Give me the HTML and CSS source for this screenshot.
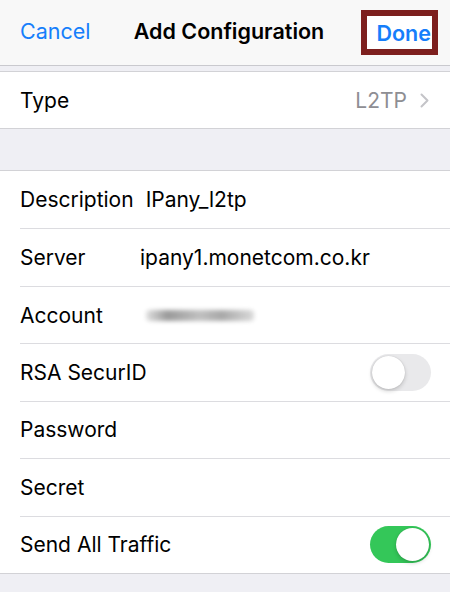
FILE: index.html
```html
<!DOCTYPE html>
<html lang="en">
<head>
  <meta charset="UTF-8" />
  <meta name="viewport" content="width=device-width, initial-scale=1.0" />
  <title>Add Configuration</title>
  <link rel="stylesheet" href="styles.css">
</head>
<body>
<div class="nav">
  <span class="nav-btn cancel">Cancel</span>
  <span class="nav-title">Add Configuration</span>
  <span class="done-box"><span class="nav-btn done">Done</span></span>
</div>

<div class="group type-group">
  <div class="row">
    <div class="cell">
      <span class="label">Type</span>
      <span class="detail">L2TP</span>
      <svg class="chevron" width="9" height="15" viewBox="0 0 9 15">
        <path d="M1.5 1.5 L7.5 7.5 L1.5 13.5" fill="none" stroke="#c4c4c8" stroke-width="2" stroke-linecap="round" stroke-linejoin="round"/>
      </svg>
    </div>
  </div>
</div>

<div class="group main-group">
  <div class="row">
    <div class="cell">
      <span class="label wide">Description</span>
      <span class="value">IPany_l2tp</span>
    </div>
  </div>
  <div class="row">
    <div class="cell">
      <span class="label col">Server</span>
      <span class="value">ipany1.monetcom.co.kr</span>
    </div>
  </div>
  <div class="row">
    <div class="cell">
      <span class="label col">Account</span>
      <span class="blurred"></span>
    </div>
  </div>
  <div class="row">
    <div class="cell">
      <span class="label">RSA SecurID</span>
      <span class="switch"><span class="knob"></span></span>
    </div>
  </div>
  <div class="row">
    <div class="cell">
      <span class="label">Password</span>
    </div>
  </div>
  <div class="row">
    <div class="cell">
      <span class="label">Secret</span>
    </div>
  </div>
  <div class="row">
    <div class="cell">
      <span class="label">Send All Traffic</span>
      <span class="switch on"><span class="knob"></span></span>
    </div>
  </div>
</div>
</body>
</html>
```

FILE: styles.css
```css
body {
  margin: 0;
  padding: 0;
  background: #efeff4;
  font-family: Inter, "Liberation Sans", Arial, sans-serif;
  color: #000;
  font-size: 21px;
}
.nav {
  height: 66px;
  box-sizing: border-box;
  border-bottom: 1px solid #c9c9ce;
  background: #f8f8f8;
  display: grid;
  grid-template-columns: 1fr auto 1fr;
  align-items: center;
  padding: 0 12px 4px 20px;
  margin-bottom: 5px;
  font-size: 21.5px;
}
.nav-btn {
  color: #157efb;
}
.cancel {
  justify-self: start;
}
.nav-title {
  font-weight: 600;
}
.done-box {
  justify-self: end;
  width: 77px;
  height: 45px;
  box-sizing: border-box;
  border: 6px solid #7d1f1e;
  background: #fff;
  display: flex;
  align-items: center;
  justify-content: flex-end;
  padding-right: 1px;
  margin-top: 4px;
}
.done {
  font-weight: 600;
}
.group {
  background: #fff;
  border-top: 1px solid #d2d2d6;
  border-bottom: 1px solid #d2d2d6;
}
.type-group {
  margin-bottom: 41px;
}
.type-group .row {
  height: 56px;
}
.row {
  height: 57.43px;
  padding-left: 20px;
}
.cell {
  height: 100%;
  box-sizing: border-box;
  display: flex;
  align-items: center;
  padding-right: 19px;
}
.row + .row .cell {
  border-top: 1px solid #dcdce0;
}
.label {
  flex: none;
}
.label.col {
  width: 120px;
}
.label.wide {
  margin-right: 12px;
}
.value {
  color: #000;
}
.detail {
  margin-left: auto;
  color: #8e8e93;
  margin-right: 13px;
}
.chevron {
  margin-right: 2px;
}
.blurred {
  display: inline-block;
  width: 108px;
  height: 11px;
  margin-left: 6px;
  background: linear-gradient(90deg, #e0e0e0, #9a9a9a 20%, #c0c0c0 50%, #a8a8a8 70%, #dadada);
  border-radius: 4px;
  filter: blur(2px);
}
.switch {
  margin-left: auto;
  width: 61px;
  height: 37px;
  border-radius: 19px;
  background: #e9e9eb;
  display: flex;
  align-items: center;
  padding: 2px;
  box-sizing: border-box;
}
.knob {
  width: 33px;
  height: 33px;
  border-radius: 50%;
  background: #fff;
  box-shadow: 0 2px 4px rgba(0, 0, 0, 0.18), 0 0 1px rgba(0, 0, 0, 0.2);
}
.switch.on {
  background: #34c759;
  justify-content: flex-end;
}
```
